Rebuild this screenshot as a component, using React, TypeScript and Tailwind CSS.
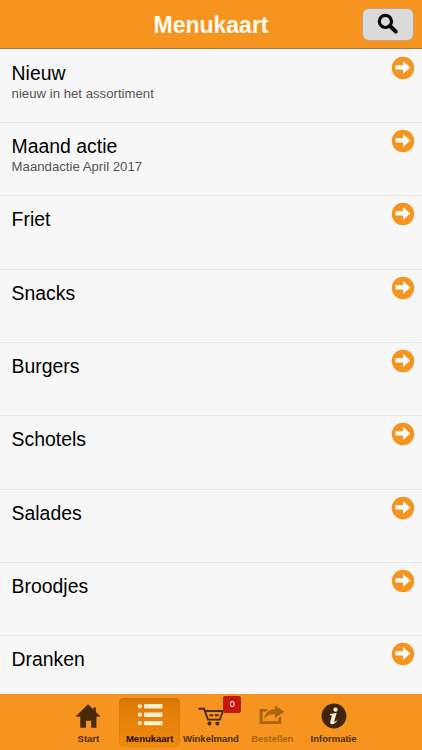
import type { ReactNode } from "react";

interface MenuItem {
    title: string;
    subtitle?: string;
}

const menuItems: MenuItem[] = [
    { title: "Nieuw", subtitle: "nieuw in het assortiment" },
    { title: "Maand actie", subtitle: "Maandactie April 2017" },
    { title: "Friet" },
    { title: "Snacks" },
    { title: "Burgers" },
    { title: "Schotels" },
    { title: "Salades" },
    { title: "Broodjes" },
    { title: "Dranken" },
];

function SearchIcon() {
    return (
        <svg width="22" height="22" viewBox="0 0 22 22" fill="none" stroke="#050505">
            <circle cx="8.4" cy="8.4" r="6.1" strokeWidth="3.2" />
            <path d="M13 13 18.8 18.7" strokeWidth="3.9" strokeLinecap="round" />
        </svg>
    );
}

function ArrowIcon() {
    return (
        <svg width="24" height="24" viewBox="0 0 24 24">
            <circle cx="12" cy="12" r="11.2" fill="#f79420" />
            <path d="M4.5 9.3h7.5V5.1l7.3 6.4-7.3 6.4v-4.3H4.5z" fill="#fff" />
        </svg>
    );
}

function HomeIcon() {
    return (
        <svg width="26" height="26" viewBox="0 0 26 26" fill="#472b08">
            <path d="M13 1.2 24.8 12.7v1.1h-3.4v10.9h-5.2v-7h-5.2v7H5.3V13.8H1.4v-1.1z" />
            <path d="M18.4 4.4h2.4v5h-2.4z" />
        </svg>
    );
}

function ListIcon() {
    return (
        <svg width="26" height="26" viewBox="0 0 26 26" fill="#ffedd2">
            <circle cx="2.8" cy="3.3" r="2.1" />
            <circle cx="2.8" cy="11.7" r="2.1" />
            <circle cx="2.8" cy="20.1" r="2.1" />
            <path d="M7.2 1.1h18.2v4.4H7.2zM7.2 9.5h18.2v4.4H7.2zM7.2 17.9h18.2v4.4H7.2z" />
        </svg>
    );
}

function CartIcon() {
    return (
        <svg width="26" height="26" viewBox="0 0 26 26" fill="none" stroke="#472b08">
            <path d="M.5 5.7h5.6l3.8 10.9h12l3-8.6H7" strokeWidth="1.9" />
            <path d="M11.4 12.3h3.8M16.8 12.3h3.8" strokeWidth="1.9" />
            <circle cx="11.5" cy="20.6" r="2" fill="#472b08" stroke="none" />
            <circle cx="19.4" cy="20.6" r="2" fill="#472b08" stroke="none" />
        </svg>
    );
}

function ShareIcon() {
    return (
        <svg width="26" height="26" viewBox="0 0 26 26" fill="#a8640f">
            <path d="M.6 5.9h8.5L6.8 8.7H3.6v9.6h15.6v-3l3-2.4v8.2H.6z" />
            <path d="M16 2.6 25.3 8.8 16 15v-3.6c-4.8-.3-8.2.9-10.8 4.4C5.9 9.9 9.7 6.5 16 6.3z" />
        </svg>
    );
}

function InfoIcon() {
    return (
        <svg width="26" height="26" viewBox="0 0 26 26">
            <circle cx="13" cy="13" r="12.4" fill="#402508" />
            <circle cx="14.5" cy="6.7" r="2.1" fill="#fff0dc" />
            <path
                d="M9 11c2.3-.2 4.2-.8 6.7-1.3l-2.5 8.5c-.3 1.2.5.8 2.2-.8l.6.7c-1.6 2.2-3.4 3.3-5 3.1-1.8-.1-2.1-1.3-1.6-3l1.4-4.9c.3-1-.1-1.2-1.8-1.1z"
                fill="#fff0dc"
            />
        </svg>
    );
}

interface Tab {
    label: string;
    icon: ReactNode;
    color: string;
    badge?: string;
}

const tabs: Tab[] = [
    { label: "Start", icon: <HomeIcon />, color: "text-[#4b2d08]" },
    {
        label: "Menukaart",
        icon: <ListIcon />,
        color: "rounded-[5px] bg-linear-to-b from-[#da7805] via-[#ea820a] to-[#ee8910] text-[#160c00] shadow-[inset_0_1px_2px_#c8720c]",
    },
    { label: "Winkelmand", icon: <CartIcon />, color: "text-[#4b2d08]", badge: "0" },
    { label: "Bestellen", icon: <ShareIcon />, color: "text-[#a8640f]" },
    { label: "Informatie", icon: <InfoIcon />, color: "text-[#4b2d08]" },
];

function MenuRow({ title, subtitle }: MenuItem) {
    return (
        <li className="flex h-[73.33px] shrink-0 items-start justify-between border-b border-[#e9e9e9] pl-[11.6px] pr-[7px] pt-[6.2px]">
            <div className="pt-[5px]">
                <h2 className="text-[19.4px] leading-[24px] text-black">{title}</h2>
                {subtitle && (
                    <p className="text-[13.2px] leading-[17px] text-[#555]">{subtitle}</p>
                )}
            </div>
            <ArrowIcon />
        </li>
    );
}

export default function App() {
    return (
        <div className="flex h-[750px] w-[422px] flex-col overflow-hidden bg-[#f7f7f7] font-['Liberation_Sans',Arial,sans-serif]">
            <header className="grid h-[49px] shrink-0 grid-cols-[1fr_auto_1fr] items-center border-b border-[#a17849] bg-[#f79420]">
                <h1 className="col-start-2 pt-[3px] text-[23px] font-bold leading-none text-[#fffaf0]">
                    Menukaart
                </h1>
                <button
                    type="button"
                    aria-label="Zoeken"
                    className="mr-2 flex h-[33px] w-[52px] items-center justify-center justify-self-end rounded-[7px] border border-[#c2a57d] bg-[#dadada]"
                >
                    <SearchIcon />
                </button>
            </header>
            <ul className="flex min-h-0 flex-1 flex-col overflow-hidden pt-[0.6px]">
                {menuItems.map((item) => (
                    <MenuRow key={item.title} {...item} />
                ))}
            </ul>
            <nav className="flex h-14 shrink-0 justify-center bg-[#f79420] pb-[3px] pt-1">
                {tabs.map((tab) => (
                    <div
                        key={tab.label}
                        className={`relative flex w-[61.3px] flex-col items-center pt-[5px] ${tab.color}`}
                    >
                        {tab.icon}
                        <span className="mt-[4px] whitespace-nowrap text-[9.5px] font-bold leading-[12px]">
                            {tab.label}
                        </span>
                        {tab.badge && (
                            <span className="absolute -top-[2px] left-[43px] flex h-[17px] w-[18px] items-center justify-center rounded-[2px] border border-[#a92512] bg-[#c7160c] text-[9px] text-white">
                                {tab.badge}
                            </span>
                        )}
                    </div>
                ))}
            </nav>
        </div>
    );
}
